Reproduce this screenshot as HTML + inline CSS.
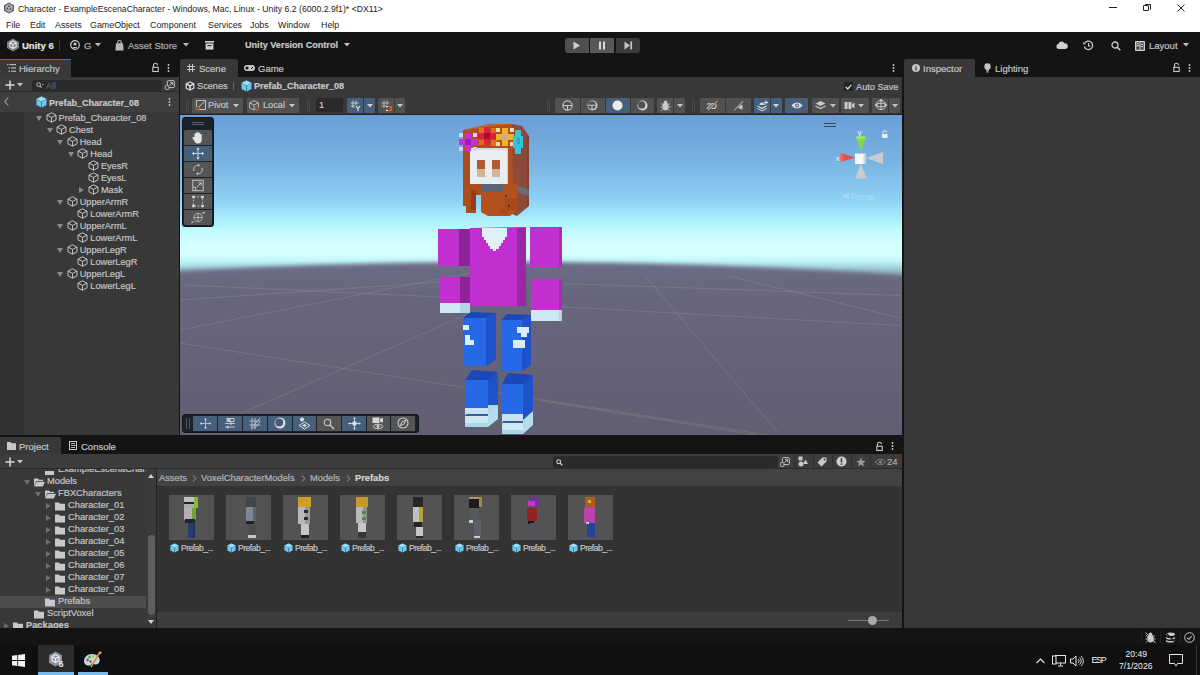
<!DOCTYPE html>
<html><head><meta charset="utf-8">
<style>
*{margin:0;padding:0;box-sizing:border-box}
html,body{width:1200px;height:675px;overflow:hidden;background:#141414;font-family:"Liberation Sans",sans-serif}
.a{position:absolute}
.t{position:absolute;white-space:nowrap;line-height:1;font-size:9.5px;color:#c4c4c4;-webkit-text-stroke:0.2px currentColor}
.b{font-weight:bold}
svg{position:absolute;overflow:visible}
.btn{position:absolute;background:#585858;border-radius:2px}
.sel{background:#46607c}
</style></head><body>
<!-- TITLE BAR -->
<div class="a" style="left:0;top:0;width:1200px;height:32px;background:#fff"></div>
<svg style="left:3px;top:2px" width="12" height="12" viewBox="0 0 12 12"><path d="M6 0.5L11 3.2V8.8L6 11.5L1 8.8V3.2Z" fill="#5a5f66"/><path d="M6 2.5L9 4.2V7.8L6 9.5L3 7.8V4.2Z" fill="none" stroke="#d8dde2" stroke-width="0.9"/><path d="M3 4.2L6 6L9 4.2M6 6V9.5" stroke="#d8dde2" stroke-width="0.9" fill="none"/></svg>
<div class="t" id="title" style="left:18px;top:4.6px;font-size:8.7px;color:#1a1a1a;-webkit-text-stroke:0">Character - ExampleEscenaCharacter - Windows, Mac, Linux - Unity 6.2 (6000.2.9f1)* &lt;DX11&gt;</div>
<div class="t" id="menu" style="left:6px;top:20.8px;font-size:8.9px;color:#1a1a1a;-webkit-text-stroke:0;width:400px">
<span style="position:absolute;left:0">File</span><span style="position:absolute;left:24px">Edit</span><span style="position:absolute;left:49px">Assets</span><span style="position:absolute;left:84px">GameObject</span><span style="position:absolute;left:144px">Component</span><span style="position:absolute;left:202px">Services</span><span style="position:absolute;left:244px">Jobs</span><span style="position:absolute;left:272px">Window</span><span style="position:absolute;left:315px">Help</span></div>
<div class="a" style="left:1109px;top:7px;width:8px;height:1px;background:#222"></div>
<div class="a" style="left:1143px;top:5px;width:6px;height:6px;border:1px solid #222;border-radius:1px"></div>
<div class="a" style="left:1145px;top:3.5px;width:6px;height:6px;border-top:1px solid #222;border-right:1px solid #222;border-radius:1px"></div>
<svg style="left:1177px;top:3.5px" width="8" height="8"><path d="M0.5 0.5L7.5 7.5M7.5 0.5L0.5 7.5" stroke="#222" stroke-width="1"/></svg>

<!-- MAIN TOOLBAR -->
<div class="a" style="left:0;top:32px;width:1200px;height:27px;background:#141414"></div>
<svg style="left:6px;top:38px" width="14" height="14" viewBox="0 0 14 14"><path d="M7 0.5L13 4V10L7 13.5L1 10V4Z" fill="#7b8088"/><path d="M7 3L10.2 4.8V8.6L7 10.5L3.8 8.6V4.8Z M3.8 4.8L7 6.6L10.2 4.8M7 6.6V10.5" fill="none" stroke="#e6e6e6" stroke-width="1.1"/></svg>
<div class="t b" style="left:22px;top:41px;font-size:9.5px;color:#e4e4e4">Unity 6</div>
<div class="a" style="left:59px;top:40px;width:1px;height:11px;background:#3a3a3a"></div>
<svg style="left:70px;top:40px" width="10" height="10" viewBox="0 0 10 10"><circle cx="5" cy="5" r="4.3" fill="none" stroke="#c8c8c8" stroke-width="1.2"/><circle cx="5" cy="4" r="1.6" fill="#c8c8c8"/><path d="M2.3 8C3 6.5 7 6.5 7.7 8" fill="#c8c8c8"/></svg>
<div class="t" style="left:84px;top:41.3px;font-size:9.5px;color:#b0b0b0">G</div>
<svg style="left:95px;top:43px" width="6" height="4"><path d="M0 0H6L3 3.5Z" fill="#bdbdbd"/></svg>
<svg style="left:115px;top:40px" width="9" height="11" viewBox="0 0 9 11"><path d="M1 3.2H8L8.6 10.5H0.4Z" fill="#b8b8b8"/><path d="M2.8 3.5V2.2A1.7 1.7 0 0 1 6.2 2.2V3.5" fill="none" stroke="#b8b8b8" stroke-width="1.2"/></svg>
<div class="t" style="left:128px;top:41.3px;font-size:9.5px;color:#b0b0b0">Asset Store</div>
<svg style="left:183px;top:43px" width="6" height="4"><path d="M0 0H6L3 3.5Z" fill="#bdbdbd"/></svg>
<svg style="left:205px;top:41px" width="9" height="9" viewBox="0 0 9 9"><rect x="0" y="0" width="9" height="1.6" fill="#cfcfcf"/><rect x="0.6" y="2.4" width="7.8" height="6.2" fill="#cfcfcf"/><rect x="2.5" y="4.2" width="4" height="1" fill="#141414"/></svg>
<div class="t b" style="left:245px;top:41px;font-size:9.1px;color:#c8c8c8">Unity Version Control</div>
<svg style="left:344px;top:43px" width="6" height="4"><path d="M0 0H6L3 3.5Z" fill="#c8c8c8"/></svg>
<!-- play controls -->
<div class="a" style="left:565px;top:38px;width:24px;height:15px;background:#4f4f4f;border-radius:3px 0 0 3px"></div>
<div class="a" style="left:590px;top:38px;width:24px;height:15px;background:#585858"></div>
<div class="a" style="left:616px;top:38px;width:24px;height:15px;background:#3b3b3b;border-radius:0 3px 3px 0"></div>
<svg style="left:573px;top:41px" width="8" height="9"><path d="M0.5 0.5L7 4.5L0.5 8.5Z" fill="#d0d0d0"/></svg>
<svg style="left:598px;top:41px" width="8" height="9"><rect x="1" y="0.5" width="2" height="8" fill="#d8d8d8"/><rect x="5" y="0.5" width="2" height="8" fill="#d8d8d8"/></svg>
<svg style="left:624px;top:41px" width="9" height="9"><path d="M0.5 0.5L6 4.5L0.5 8.5Z" fill="#c4c4c4"/><rect x="6.3" y="0.5" width="1.8" height="8" fill="#c4c4c4"/></svg>
<!-- right icons -->
<svg style="left:1056px;top:41px" width="12" height="8" viewBox="0 0 12 8"><path d="M2.5 8A2.5 2.5 0 0 1 2.3 3.1A3.4 3.4 0 0 1 8.6 2.4A2.8 2.8 0 0 1 9.3 8Z" fill="#cfcfcf"/></svg>
<svg style="left:1083px;top:40px" width="11" height="11" viewBox="0 0 11 11"><path d="M2 3A4.2 4.2 0 1 1 1.4 6.5" fill="none" stroke="#cfcfcf" stroke-width="1.2"/><path d="M0.3 1.5L2.6 4.2L0.4 4.4Z" fill="#cfcfcf"/><path d="M5.5 3V6H7.5" fill="none" stroke="#cfcfcf" stroke-width="1.1"/></svg>
<svg style="left:1111px;top:41px" width="10" height="10" viewBox="0 0 10 10"><circle cx="4" cy="4" r="3" fill="none" stroke="#cfcfcf" stroke-width="1.3"/><path d="M6.2 6.2L9.3 9.3" stroke="#cfcfcf" stroke-width="1.4"/></svg>
<svg style="left:1135px;top:41px" width="10" height="10" viewBox="0 0 10 10"><rect x="0" y="0" width="10" height="10" rx="0.8" fill="#cfcfcf"/><rect x="1.3" y="1.3" width="3.2" height="3" fill="#454545"/><rect x="1.3" y="5.3" width="3.2" height="3.4" fill="#454545"/><rect x="5.5" y="1.3" width="3.2" height="7.4" fill="#454545"/><rect x="2" y="2" width="1.5" height="1.5" fill="#cfcfcf"/><rect x="6" y="3" width="2" height="1" fill="#cfcfcf"/><rect x="6" y="5" width="2" height="1" fill="#cfcfcf"/></svg>
<div class="t" style="left:1149px;top:41px;font-size:9.5px;color:#c4c4c4">Layout</div>
<svg style="left:1183px;top:43px" width="6" height="4"><path d="M0 0H6L3 3.5Z" fill="#c4c4c4"/></svg>

<!-- TAB ROW -->
<div class="a" style="left:0;top:59px;width:1200px;height:18px;background:#141414"></div>
<!-- Hierarchy tab -->
<div class="a" style="left:0;top:59px;width:71px;height:18px;background:#383838;border-radius:0 2px 0 0"></div>
<div class="a" style="left:0;top:59px;width:71px;height:1px;background:#3a79bb"></div>
<svg style="left:7px;top:64px" width="9" height="8" viewBox="0 0 9 8"><rect x="0" y="0" width="1.5" height="1.2" fill="#bbb"/><rect x="2.5" y="0" width="6.5" height="1.2" fill="#bbb"/><rect x="1.5" y="3.3" width="1.5" height="1.2" fill="#bbb"/><rect x="4" y="3.3" width="5" height="1.2" fill="#bbb"/><rect x="1.5" y="6.6" width="1.5" height="1.2" fill="#bbb"/><rect x="4" y="6.6" width="5" height="1.2" fill="#bbb"/></svg>
<div class="t" style="left:19px;top:64px;font-size:9.5px;color:#c4c4c4">Hierarchy</div>
<svg style="left:152px;top:63px" width="7" height="9" viewBox="0 0 7 9"><path d="M1.5 4V2.3A2 2 0 0 1 5.5 2.3" fill="none" stroke="#c8c8c8" stroke-width="1.1"/><rect x="0.8" y="4.3" width="5.4" height="4.2" fill="none" stroke="#c8c8c8" stroke-width="1.1"/></svg>
<svg style="left:167px;top:64px" width="3" height="9"><circle cx="1.5" cy="1" r="0.9" fill="#d0d0d0"/><circle cx="1.5" cy="4" r="0.9" fill="#d0d0d0"/><circle cx="1.5" cy="7" r="0.9" fill="#d0d0d0"/></svg>

<!-- Scene tab -->
<div class="a" style="left:180px;top:59px;width:58px;height:18px;background:#383838;border-radius:2px 2px 0 0"></div>
<svg style="left:187px;top:64px" width="8" height="8" viewBox="0 0 8 8"><path d="M2.5 0V8M5.5 0V8M0 2.5H8M0 5.5H8" stroke="#c4c4c4" stroke-width="1.1"/></svg>
<div class="t" style="left:199px;top:64px;font-size:9.5px;color:#c4c4c4">Scene</div>
<svg style="left:244px;top:65px" width="11" height="6" viewBox="0 0 11 6"><rect x="0" y="0" width="11" height="6" rx="3" fill="#c4c4c4"/><circle cx="3" cy="3" r="1.6" fill="#191919"/><path d="M7 4L9 2" stroke="#191919" stroke-width="1"/></svg>
<div class="t" style="left:258px;top:64px;font-size:9.5px;color:#c4c4c4">Game</div>
<svg style="left:892px;top:64px" width="3" height="9"><circle cx="1.5" cy="1" r="0.9" fill="#d0d0d0"/><circle cx="1.5" cy="4" r="0.9" fill="#d0d0d0"/><circle cx="1.5" cy="7" r="0.9" fill="#d0d0d0"/></svg>

<!-- Inspector tab -->
<div class="a" style="left:904px;top:59px;width:71px;height:18px;background:#383838;border-radius:2px 2px 0 0"></div>
<svg style="left:912px;top:64px" width="8" height="8" viewBox="0 0 8 8"><circle cx="4" cy="4" r="4" fill="#c8c8c8"/><rect x="3.4" y="3.3" width="1.3" height="3.3" fill="#383838"/><circle cx="4" cy="2.1" r="0.7" fill="#383838"/></svg>
<div class="t" style="left:923px;top:64px;font-size:9.5px;color:#c4c4c4">Inspector</div>
<svg style="left:984px;top:63px" width="7" height="10" viewBox="0 0 7 10"><circle cx="3.5" cy="3.5" r="3.2" fill="#c4c4c4"/><rect x="2.2" y="5.5" width="2.6" height="2.3" fill="#c4c4c4"/><rect x="2.4" y="8.3" width="2.2" height="1.2" fill="#c4c4c4"/></svg>
<div class="t" style="left:995px;top:64px;font-size:9.5px;color:#c4c4c4">Lighting</div>
<svg style="left:1173px;top:63px" width="7" height="9" viewBox="0 0 7 9"><path d="M1.5 4V2.3A2 2 0 0 1 5.5 2.3" fill="none" stroke="#c8c8c8" stroke-width="1.1"/><rect x="0.8" y="4.3" width="5.4" height="4.2" fill="none" stroke="#c8c8c8" stroke-width="1.1"/></svg>
<svg style="left:1188px;top:64px" width="3" height="9"><circle cx="1.5" cy="1" r="0.9" fill="#d0d0d0"/><circle cx="1.5" cy="4" r="0.9" fill="#d0d0d0"/><circle cx="1.5" cy="7" r="0.9" fill="#d0d0d0"/></svg>

<!-- PANEL BODIES -->
<div class="a" id="hier" style="left:0;top:77px;width:179px;height:358px;background:#383838"></div>
<div class="a" id="scenep" style="left:180px;top:77px;width:722px;height:358px;background:#383838"></div>
<div class="a" id="insp" style="left:904px;top:77px;width:296px;height:551px;background:#383838"></div>

<div class="a" style="left:0;top:77px;width:179px;height:15px;background:#3c3c3c"></div>
<div class="a" style="left:0;top:91px;width:179px;height:1px;background:#2a2a2a"></div>
<svg style="left:5px;top:80px" width="10" height="10"><path d="M5 0.5V9.5M0.5 5H9.5" stroke="#d8d8d8" stroke-width="1.5"/></svg>
<svg style="left:17px;top:83px" width="6" height="4"><path d="M0 0H6L3 3.5Z" fill="#c4c4c4"/></svg>
<div class="a" style="left:32px;top:80px;width:130px;height:11px;background:#2a2a2a;border-radius:3px"></div>
<svg style="left:36px;top:82px" width="8" height="7" viewBox="0 0 8 7"><circle cx="2.6" cy="2.6" r="1.9" fill="none" stroke="#bbb" stroke-width="1"/><path d="M3.9 3.9L5.6 5.6" stroke="#bbb" stroke-width="1.1"/><path d="M6 2.5H7.6" stroke="#bbb" stroke-width="0.8"/></svg>
<div class="t" style="left:46px;top:82px;font-size:9px;color:#5e5e5e">All</div>
<svg style="left:165px;top:80px" width="10" height="10" viewBox="0 0 10 10"><rect x="2.3" y="0.6" width="7" height="7" rx="1" fill="none" stroke="#c4c4c4" stroke-width="1"/><path d="M4.5 5.5L7.3 2.7M5 2.6H7.4V5" fill="none" stroke="#c4c4c4" stroke-width="0.9"/><rect x="0.4" y="5.6" width="3.5" height="3.8" rx="0.8" fill="#383838" stroke="#c4c4c4" stroke-width="0.9"/></svg>
<div class="a" style="left:0;top:92px;width:179px;height:20px;background:#3e3e3e"></div>
<svg style="left:4px;top:97px" width="5" height="9"><path d="M4.3 0.5L0.8 4.5L4.3 8.5" fill="none" stroke="#a8a8a8" stroke-width="1.1"/></svg>
<svg style="left:36px;top:96px" width="11" height="12" viewBox="0 0 11 12"><path d="M5.5 0.5L10.5 3V9L5.5 11.5L0.5 9V3Z" fill="#6cc8f0"/><path d="M0.5 3L5.5 5.6L10.5 3M5.5 5.6V11.5" fill="none" stroke="#2b6f94" stroke-width="0.8"/><path d="M5.5 0.5L10.5 3L5.5 5.6L0.5 3Z" fill="#98def9"/></svg>
<div class="t b" style="left:49px;top:98.7px;font-size:9px;color:#c8c8c8">Prefab_Character_08</div>
<svg style="left:168px;top:98px" width="3" height="9"><circle cx="1.5" cy="1" r="0.9" fill="#c8c8c8"/><circle cx="1.5" cy="4" r="0.9" fill="#c8c8c8"/><circle cx="1.5" cy="7" r="0.9" fill="#c8c8c8"/></svg>
<div class="a" style="left:0;top:112px;width:24px;height:323px;background:#323232"></div>
<svg style="left:36.0px;top:116px" width="6" height="5"><path d="M0 0H6L3 5Z" fill="#8a8a8a"/></svg>
<svg style="left:45.5px;top:111.8px" width="11" height="11" viewBox="0 0 11 11"><path d="M5.5 0.8L10 3.1V7.9L5.5 10.2L1 7.9V3.1Z M1 3.1L5.5 5.4L10 3.1M5.5 5.4V10.2" fill="none" stroke="#c8c8c8" stroke-width="0.95" stroke-linejoin="round"/></svg>
<div class="t" style="left:58.5px;top:114px;font-size:9.2px;color:#c4c4c4">Prefab_Character_08</div>
<svg style="left:46.6px;top:128px" width="6" height="5"><path d="M0 0H6L3 5Z" fill="#8a8a8a"/></svg>
<svg style="left:56.1px;top:123.8px" width="11" height="11" viewBox="0 0 11 11"><path d="M5.5 0.8L10 3.1V7.9L5.5 10.2L1 7.9V3.1Z M1 3.1L5.5 5.4L10 3.1M5.5 5.4V10.2" fill="none" stroke="#c8c8c8" stroke-width="0.95" stroke-linejoin="round"/></svg>
<div class="t" style="left:69.1px;top:126px;font-size:9.2px;color:#c4c4c4">Chest</div>
<svg style="left:57.2px;top:140px" width="6" height="5"><path d="M0 0H6L3 5Z" fill="#8a8a8a"/></svg>
<svg style="left:66.7px;top:135.8px" width="11" height="11" viewBox="0 0 11 11"><path d="M5.5 0.8L10 3.1V7.9L5.5 10.2L1 7.9V3.1Z M1 3.1L5.5 5.4L10 3.1M5.5 5.4V10.2" fill="none" stroke="#c8c8c8" stroke-width="0.95" stroke-linejoin="round"/></svg>
<div class="t" style="left:79.7px;top:138px;font-size:9.2px;color:#c4c4c4">Head</div>
<svg style="left:67.8px;top:152px" width="6" height="5"><path d="M0 0H6L3 5Z" fill="#8a8a8a"/></svg>
<svg style="left:77.3px;top:147.8px" width="11" height="11" viewBox="0 0 11 11"><path d="M5.5 0.8L10 3.1V7.9L5.5 10.2L1 7.9V3.1Z M1 3.1L5.5 5.4L10 3.1M5.5 5.4V10.2" fill="none" stroke="#c8c8c8" stroke-width="0.95" stroke-linejoin="round"/></svg>
<div class="t" style="left:90.3px;top:150px;font-size:9.2px;color:#c4c4c4">Head</div>
<svg style="left:87.9px;top:159.8px" width="11" height="11" viewBox="0 0 11 11"><path d="M5.5 0.8L10 3.1V7.9L5.5 10.2L1 7.9V3.1Z M1 3.1L5.5 5.4L10 3.1M5.5 5.4V10.2" fill="none" stroke="#c8c8c8" stroke-width="0.95" stroke-linejoin="round"/></svg>
<div class="t" style="left:100.9px;top:162px;font-size:9.2px;color:#c4c4c4">EyesR</div>
<svg style="left:87.9px;top:171.8px" width="11" height="11" viewBox="0 0 11 11"><path d="M5.5 0.8L10 3.1V7.9L5.5 10.2L1 7.9V3.1Z M1 3.1L5.5 5.4L10 3.1M5.5 5.4V10.2" fill="none" stroke="#c8c8c8" stroke-width="0.95" stroke-linejoin="round"/></svg>
<div class="t" style="left:100.9px;top:174px;font-size:9.2px;color:#c4c4c4">EyesL</div>
<svg style="left:78.9px;top:187px" width="5" height="6"><path d="M0 0V6L5 3Z" fill="#8a8a8a"/></svg>
<svg style="left:87.9px;top:183.8px" width="11" height="11" viewBox="0 0 11 11"><path d="M5.5 0.8L10 3.1V7.9L5.5 10.2L1 7.9V3.1Z M1 3.1L5.5 5.4L10 3.1M5.5 5.4V10.2" fill="none" stroke="#c8c8c8" stroke-width="0.95" stroke-linejoin="round"/></svg>
<div class="t" style="left:100.9px;top:186px;font-size:9.2px;color:#c4c4c4">Mask</div>
<svg style="left:57.2px;top:200px" width="6" height="5"><path d="M0 0H6L3 5Z" fill="#8a8a8a"/></svg>
<svg style="left:66.7px;top:195.8px" width="11" height="11" viewBox="0 0 11 11"><path d="M5.5 0.8L10 3.1V7.9L5.5 10.2L1 7.9V3.1Z M1 3.1L5.5 5.4L10 3.1M5.5 5.4V10.2" fill="none" stroke="#c8c8c8" stroke-width="0.95" stroke-linejoin="round"/></svg>
<div class="t" style="left:79.7px;top:198px;font-size:9.2px;color:#c4c4c4">UpperArmR</div>
<svg style="left:77.3px;top:207.8px" width="11" height="11" viewBox="0 0 11 11"><path d="M5.5 0.8L10 3.1V7.9L5.5 10.2L1 7.9V3.1Z M1 3.1L5.5 5.4L10 3.1M5.5 5.4V10.2" fill="none" stroke="#c8c8c8" stroke-width="0.95" stroke-linejoin="round"/></svg>
<div class="t" style="left:90.3px;top:210px;font-size:9.2px;color:#c4c4c4">LowerArmR</div>
<svg style="left:57.2px;top:224px" width="6" height="5"><path d="M0 0H6L3 5Z" fill="#8a8a8a"/></svg>
<svg style="left:66.7px;top:219.8px" width="11" height="11" viewBox="0 0 11 11"><path d="M5.5 0.8L10 3.1V7.9L5.5 10.2L1 7.9V3.1Z M1 3.1L5.5 5.4L10 3.1M5.5 5.4V10.2" fill="none" stroke="#c8c8c8" stroke-width="0.95" stroke-linejoin="round"/></svg>
<div class="t" style="left:79.7px;top:222px;font-size:9.2px;color:#c4c4c4">UpperArmL</div>
<svg style="left:77.3px;top:231.8px" width="11" height="11" viewBox="0 0 11 11"><path d="M5.5 0.8L10 3.1V7.9L5.5 10.2L1 7.9V3.1Z M1 3.1L5.5 5.4L10 3.1M5.5 5.4V10.2" fill="none" stroke="#c8c8c8" stroke-width="0.95" stroke-linejoin="round"/></svg>
<div class="t" style="left:90.3px;top:234px;font-size:9.2px;color:#c4c4c4">LowerArmL</div>
<svg style="left:57.2px;top:248px" width="6" height="5"><path d="M0 0H6L3 5Z" fill="#8a8a8a"/></svg>
<svg style="left:66.7px;top:243.8px" width="11" height="11" viewBox="0 0 11 11"><path d="M5.5 0.8L10 3.1V7.9L5.5 10.2L1 7.9V3.1Z M1 3.1L5.5 5.4L10 3.1M5.5 5.4V10.2" fill="none" stroke="#c8c8c8" stroke-width="0.95" stroke-linejoin="round"/></svg>
<div class="t" style="left:79.7px;top:246px;font-size:9.2px;color:#c4c4c4">UpperLegR</div>
<svg style="left:77.3px;top:255.8px" width="11" height="11" viewBox="0 0 11 11"><path d="M5.5 0.8L10 3.1V7.9L5.5 10.2L1 7.9V3.1Z M1 3.1L5.5 5.4L10 3.1M5.5 5.4V10.2" fill="none" stroke="#c8c8c8" stroke-width="0.95" stroke-linejoin="round"/></svg>
<div class="t" style="left:90.3px;top:258px;font-size:9.2px;color:#c4c4c4">LowerLegR</div>
<svg style="left:57.2px;top:272px" width="6" height="5"><path d="M0 0H6L3 5Z" fill="#8a8a8a"/></svg>
<svg style="left:66.7px;top:267.8px" width="11" height="11" viewBox="0 0 11 11"><path d="M5.5 0.8L10 3.1V7.9L5.5 10.2L1 7.9V3.1Z M1 3.1L5.5 5.4L10 3.1M5.5 5.4V10.2" fill="none" stroke="#c8c8c8" stroke-width="0.95" stroke-linejoin="round"/></svg>
<div class="t" style="left:79.7px;top:270px;font-size:9.2px;color:#c4c4c4">UpperLegL</div>
<svg style="left:77.3px;top:279.8px" width="11" height="11" viewBox="0 0 11 11"><path d="M5.5 0.8L10 3.1V7.9L5.5 10.2L1 7.9V3.1Z M1 3.1L5.5 5.4L10 3.1M5.5 5.4V10.2" fill="none" stroke="#c8c8c8" stroke-width="0.95" stroke-linejoin="round"/></svg>
<div class="t" style="left:90.3px;top:282px;font-size:9.2px;color:#c4c4c4">LowerLegL</div>

<svg style="left:185px;top:81px" width="10" height="10" viewBox="0 0 10 10"><path d="M5 0.2L9.4 2.6V7.4L5 9.8L0.6 7.4V2.6Z" fill="#dcdcdc"/><path d="M1.8 3.9L4.2 5.2V8.2L1.8 6.8Z M8.2 3.9L5.8 5.2V8.2L8.2 6.8Z M5 1.4L7.3 2.7L5 4L2.7 2.7Z" fill="#383838"/></svg>
<div class="t" style="left:197px;top:82px;font-size:9.2px;color:#c4c4c4">Scenes</div>
<div class="a" style="left:233px;top:82px;width:1px;height:8px;background:#6a6a6a"></div>
<svg style="left:241px;top:80px" width="11" height="12" viewBox="0 0 11 12"><path d="M5.5 0.5L10.5 3V9L5.5 11.5L0.5 9V3Z" fill="#6cc8f0"/><path d="M0.5 3L5.5 5.6L10.5 3M5.5 5.6V11.5" fill="none" stroke="#2b6f94" stroke-width="0.8"/><path d="M5.5 0.5L10.5 3L5.5 5.6L0.5 3Z" fill="#98def9"/></svg>
<div class="t b" style="left:254px;top:82.3px;font-size:9px;color:#c8c8c8">Prefab_Character_08</div>
<div class="a" style="left:844px;top:82px;width:9px;height:9px;background:#232323;border-radius:1px"></div>
<svg style="left:845px;top:84px" width="7" height="6"><path d="M0.8 3L2.8 5L6.3 0.8" fill="none" stroke="#e0e0e0" stroke-width="1.2"/></svg>
<div class="t" style="left:856px;top:83px;font-size:9.2px;color:#c4c4c4">Auto Save</div>
<div class="a" style="left:186px;top:99px;width:1px;height:13px;background:#4a4a4a"></div><div class="a" style="left:188px;top:99px;width:1px;height:13px;background:#4a4a4a"></div>
<div class="a" style="left:192px;top:98px;width:51px;height:15px;background:#515151;border-radius:1px"></div>
<svg style="left:195px;top:100px" width="11" height="11" viewBox="0 0 11 11"><rect x="1.5" y="0.5" width="9" height="9" fill="none" stroke="#c0c0c0" stroke-width="1"/><path d="M3 8L9.5 1.5" stroke="#c0c0c0" stroke-width="1"/><circle cx="2.5" cy="8.5" r="1.8" fill="#585858" stroke="#e0582a" stroke-width="1"/></svg>
<div class="t" style="left:208px;top:101px;font-size:9.2px;color:#c4c4c4">Pivot</div>
<svg style="left:233px;top:104px" width="6" height="4"><path d="M0 0H6L3 3.5Z" fill="#c4c4c4"/></svg>
<div class="a" style="left:247px;top:98px;width:52px;height:15px;background:#515151;border-radius:1px"></div>
<svg style="left:249px;top:100px" width="11" height="11" viewBox="0 0 11 11"><path d="M5 0.6L9.5 2.8V7.8L5 10L0.6 7.8V2.8Z M0.6 2.8L5 5L9.5 2.8M5 5V10" fill="none" stroke="#c0c0c0" stroke-width="0.95"/><circle cx="8" cy="8.5" r="1.8" fill="#585858" stroke="#e0582a" stroke-width="1"/></svg>
<div class="t" style="left:263px;top:101px;font-size:9.2px;color:#c4c4c4">Local</div>
<svg style="left:289px;top:104px" width="6" height="4"><path d="M0 0H6L3 3.5Z" fill="#c4c4c4"/></svg>
<div class="a" style="left:307px;top:99px;width:1px;height:13px;background:#4a4a4a"></div><div class="a" style="left:309px;top:99px;width:1px;height:13px;background:#4a4a4a"></div>
<div class="a" style="left:316px;top:98px;width:27px;height:14px;background:#2a2a2a;border-radius:2px"></div>
<div class="t" style="left:319px;top:101px;font-size:9.2px;color:#c4c4c4">1</div>
<div class="a" style="left:347px;top:98px;width:16px;height:15px;background:#46607c;border-radius:1px"></div><div class="a" style="left:364px;top:98px;width:11px;height:15px;background:#46607c;border-radius:1px"></div>
<svg style="left:350px;top:100px" width="11" height="11" viewBox="0 0 11 11"><path d="M3 0.5V8M6 0.5V5M0.5 3H8.5M0.5 6H5" stroke="#d0d0d0" stroke-width="0.9"/><path d="M6 6L8 8.5L10 6M8 8.5V11" stroke="#e8e8e8" stroke-width="1.1" fill="none"/></svg>
<svg style="left:367px;top:104px" width="6" height="4"><path d="M0 0H6L3 3.5Z" fill="#d0d0d0"/></svg>
<div class="a" style="left:378px;top:98px;width:16px;height:15px;background:#515151;border-radius:1px"></div><div class="a" style="left:395px;top:98px;width:10px;height:15px;background:#515151;border-radius:1px"></div>
<svg style="left:381px;top:100px" width="11" height="11" viewBox="0 0 11 11"><path d="M3 0.5V8M6 0.5V5M0.5 3H8.5M0.5 6H5" stroke="#c0c0c0" stroke-width="0.9"/><path d="M6 6.5H8.5A2 2 0 0 1 8.5 10.5H6" stroke="#f06020" stroke-width="1.3" fill="none"/><rect x="5" y="6" width="1.5" height="1.2" fill="#fff"/><rect x="5" y="9.8" width="1.5" height="1.2" fill="#fff"/></svg>
<svg style="left:397px;top:104px" width="6" height="4"><path d="M0 0H6L3 3.5Z" fill="#c4c4c4"/></svg>
<div class="a" style="left:547px;top:99px;width:1px;height:13px;background:#4a4a4a"></div><div class="a" style="left:549px;top:99px;width:1px;height:13px;background:#4a4a4a"></div>
<div class="a" style="left:555px;top:98px;width:25px;height:15px;background:#515151;border-radius:1px"></div><div class="a" style="left:581px;top:98px;width:24px;height:15px;background:#515151;border-radius:1px"></div><div class="a" style="left:606px;top:98px;width:24px;height:15px;background:#46607c;border-radius:1px"></div><div class="a" style="left:631px;top:98px;width:23px;height:15px;background:#515151;border-radius:1px"></div>
<svg style="left:562px;top:100px" width="11" height="11" viewBox="0 0 11 11"><circle cx="5.5" cy="5.5" r="4.6" fill="none" stroke="#c8c8c8" stroke-width="1.1"/><path d="M0.8 5.5H10.2M5.5 5.5V10.2" stroke="#c8c8c8" stroke-width="1.1"/></svg>
<svg style="left:587px;top:100px" width="11" height="11" viewBox="0 0 11 11"><path d="M5.5 0.4A5.1 5.1 0 1 1 5.5 10.6A5.1 5.1 0 1 1 5.5 0.4Z M4.9 1.2A3.9 3.9 0 1 0 4.9 9A3.9 3.9 0 1 0 4.9 1.2Z" fill="#c8c8c8" fill-rule="evenodd"/><path d="M1 5.2H9M5 5.2V9.2" stroke="#c8c8c8" stroke-width="1.1"/></svg>
<svg style="left:612px;top:100px" width="11" height="11"><circle cx="5.5" cy="5.5" r="5" fill="#ececec"/></svg>
<svg style="left:637px;top:100px" width="11" height="11" viewBox="0 0 11 11"><path d="M5.5 0.4A5.1 5.1 0 1 1 5.5 10.6A5.1 5.1 0 1 1 5.5 0.4Z M4.7 1.3A3.6 3.6 0 1 0 4.7 8.5A3.6 3.6 0 1 0 4.7 1.3Z" fill="#d0d0d0" fill-rule="evenodd"/></svg>
<div class="a" style="left:657px;top:98px;width:16px;height:15px;background:#515151;border-radius:1px"></div><div class="a" style="left:674px;top:98px;width:11px;height:15px;background:#515151;border-radius:1px"></div>
<svg style="left:660px;top:100px" width="11" height="11" viewBox="0 0 11 11"><ellipse cx="5.5" cy="6.5" rx="3.2" ry="4" fill="#c8c8c8"/><circle cx="5.5" cy="2.2" r="1.8" fill="#c8c8c8"/><path d="M1 3.5L2.5 4.5M10 3.5L8.5 4.5M0.5 7H2M10.5 7H9M1 10.5L2.5 9.3M10 10.5L8.5 9.3" stroke="#c8c8c8" stroke-width="0.9"/></svg>
<svg style="left:677px;top:104px" width="6" height="4"><path d="M0 0H6L3 3.5Z" fill="#c4c4c4"/></svg>
<div class="a" style="left:692px;top:99px;width:1px;height:13px;background:#4a4a4a"></div><div class="a" style="left:694px;top:99px;width:1px;height:13px;background:#4a4a4a"></div>
<div class="a" style="left:700px;top:98px;width:25px;height:15px;background:#515151;border-radius:1px"></div><div class="a" style="left:726px;top:98px;width:25px;height:15px;background:#515151;border-radius:1px"></div>
<svg style="left:706px;top:100px" width="14" height="11" viewBox="0 0 14 11"><text x="0.5" y="9" font-family="Liberation Sans" font-weight="bold" font-size="8.5" fill="#c8c8c8" letter-spacing="-0.6">2D</text><path d="M2 10.3L11.5 1" stroke="#515151" stroke-width="2.2"/><path d="M2 10.3L11.5 1" stroke="#d0d0d0" stroke-width="1"/></svg><svg style="left:733px;top:100px" width="11" height="11" viewBox="0 0 11 11"><path d="M5 6.5H7.5L9.5 4.5V9.5L7.5 7.8" fill="#c8c8c8"/><path d="M6.5 4.8L8.5 3V9.7L6.5 8.2H5V6.8" fill="#c8c8c8"/><path d="M1.2 10.3L10 1.2" stroke="#515151" stroke-width="2"/><path d="M1.2 10.3L10 1.2" stroke="#d0d0d0" stroke-width="1"/></svg><div class="a" style="left:754px;top:98px;width:16px;height:15px;background:#46607c;border-radius:1px"></div><div class="a" style="left:771px;top:98px;width:11px;height:15px;background:#46607c;border-radius:1px"></div>
<svg style="left:757px;top:100px" width="12" height="11" viewBox="0 0 12 11"><path d="M0.5 6L5 8.5L9.5 6" fill="none" stroke="#d8d8d8" stroke-width="1.2"/><path d="M0.5 8.5L5 11L9.5 8.5" fill="none" stroke="#d8d8d8" stroke-width="1"/><path d="M2.5 5A2.5 2.5 0 0 1 7.5 5Z" fill="#d8d8d8"/><path d="M9 0.5V4.5M7 2.5H11" stroke="#e8e8e8" stroke-width="1"/></svg>
<svg style="left:773px;top:104px" width="6" height="4"><path d="M0 0H6L3 3.5Z" fill="#d0d0d0"/></svg>
<div class="a" style="left:785px;top:98px;width:23px;height:15px;background:#46607c;border-radius:1px"></div>
<svg style="left:791px;top:101px" width="12" height="9" viewBox="0 0 12 9"><path d="M0.5 4.5C3 0.5 9 0.5 11.5 4.5C9 8.5 3 8.5 0.5 4.5Z" fill="#d8d8d8"/><circle cx="6" cy="4.5" r="2" fill="#46607c"/><circle cx="6" cy="4.5" r="1" fill="#d8d8d8"/></svg>
<div class="a" style="left:812px;top:98px;width:27px;height:15px;background:#515151;border-radius:1px"></div>
<svg style="left:815px;top:100px" width="11" height="11" viewBox="0 0 11 11"><path d="M5.5 1L10.5 3.5L5.5 6L0.5 3.5Z" fill="#c8c8c8"/><path d="M0.5 6L5.5 8.5L10.5 6" fill="none" stroke="#c8c8c8" stroke-width="1.3"/></svg>
<svg style="left:830px;top:104px" width="6" height="4"><path d="M0 0H6L3 3.5Z" fill="#c4c4c4"/></svg>
<div class="a" style="left:841px;top:98px;width:28px;height:15px;background:#515151;border-radius:1px"></div>
<svg style="left:844px;top:101px" width="11" height="9" viewBox="0 0 11 9"><rect x="0.5" y="1" width="7" height="7" fill="#c8c8c8"/><path d="M8 3.5L10.5 1.5V7.5L8 5.5Z" fill="#c8c8c8"/><path d="M4 1V8" stroke="#585858" stroke-width="0.8"/></svg>
<svg style="left:858px;top:104px" width="6" height="4"><path d="M0 0H6L3 3.5Z" fill="#c4c4c4"/></svg>
<div class="a" style="left:872px;top:98px;width:16px;height:15px;background:#515151;border-radius:1px"></div><div class="a" style="left:889px;top:98px;width:11px;height:15px;background:#515151;border-radius:1px"></div>
<svg style="left:875px;top:99px" width="12" height="12" viewBox="0 0 12 12"><circle cx="6" cy="6" r="4.6" fill="none" stroke="#d0d0d0" stroke-width="1"/><ellipse cx="6" cy="6" rx="4.6" ry="1.8" fill="none" stroke="#d0d0d0" stroke-width="0.9"/><path d="M6 1.4V10.6" stroke="#d0d0d0" stroke-width="0.9"/><circle cx="6" cy="1.3" r="1.2" fill="#d0d0d0"/><circle cx="1.3" cy="6" r="1.2" fill="#d0d0d0"/><circle cx="10.7" cy="6" r="1.2" fill="#d0d0d0"/></svg>
<svg style="left:892px;top:104px" width="6" height="4"><path d="M0 0H6L3 3.5Z" fill="#c4c4c4"/></svg>
<svg style="left:180px;top:114px;overflow:hidden" width="722" height="321" viewBox="180 114 722 321"><defs><linearGradient id="sky" x1="0" y1="114" x2="0" y2="272" gradientUnits="userSpaceOnUse"><stop offset="0" stop-color="#6a9ed5"/><stop offset="0.29" stop-color="#78b2e2"/><stop offset="0.54" stop-color="#8ed0f4"/><stop offset="0.64" stop-color="#a2e8fa"/><stop offset="0.74" stop-color="#c0fbfe"/><stop offset="0.82" stop-color="#d4feff"/><stop offset="0.89" stop-color="#d6feff"/><stop offset="0.93" stop-color="#bff6f8"/><stop offset="1" stop-color="#90b8c8"/></linearGradient><linearGradient id="gnd" x1="0" y1="258" x2="0" y2="435" gradientUnits="userSpaceOnUse"><stop offset="0" stop-color="#6d6d8a"/><stop offset="0.15" stop-color="#68677f"/><stop offset="1" stop-color="#625f72"/></linearGradient><filter id="bl" x="-5%" y="-50%" width="110%" height="200%"><feGaussianBlur stdDeviation="2.2"/></filter></defs><rect x="180" y="114" width="722" height="321" fill="url(#sky)"/><path d="M160,272.1 L180,271.0 L200,270.0 L220,269.0 L240,268.1 L260,267.2 L280,266.4 L300,265.7 L320,265.1 L340,264.5 L360,263.9 L380,263.5 L400,263.1 L420,262.8 L440,262.5 L460,262.3 L480,262.2 L500,262.1 L520,262.1 L540,262.2 L560,262.3 L580,262.5 L600,262.8 L620,263.1 L640,263.5 L660,263.9 L680,264.4 L700,265.0 L720,265.7 L740,266.4 L760,267.2 L780,268.0 L800,268.9 L820,269.9 L840,271.0 L860,272.1 L880,273.3 L900,274.5 L920,275.8 L924,440 L160,440Z" fill="url(#gnd)" filter="url(#bl)"/><line x1="180" y1="330" x2="470" y2="273" stroke="#a8a090" stroke-opacity="0.32" stroke-width="0.9"/><line x1="180" y1="343" x2="780" y2="437" stroke="#a8a090" stroke-opacity="0.32" stroke-width="0.9"/><line x1="240" y1="414" x2="470" y2="313" stroke="#a8a090" stroke-opacity="0.32" stroke-width="0.9"/><line x1="645" y1="276" x2="780" y2="435" stroke="#a8a090" stroke-opacity="0.32" stroke-width="0.9"/><line x1="530" y1="305" x2="900" y2="325.5" stroke="#a8a090" stroke-opacity="0.32" stroke-width="0.9"/><line x1="729" y1="276" x2="900" y2="318" stroke="#a8a090" stroke-opacity="0.32" stroke-width="0.9"/><line x1="564" y1="283.5" x2="900" y2="295.5" stroke="#a8a090" stroke-opacity="0.32" stroke-width="0.9"/><line x1="180" y1="300" x2="441" y2="282" stroke="#a8a090" stroke-opacity="0.32" stroke-width="0.9"/><line x1="186" y1="285" x2="441" y2="297" stroke="#a8a090" stroke-opacity="0.32" stroke-width="0.9"/><line x1="540" y1="400.5" x2="756" y2="435" stroke="#a8a090" stroke-opacity="0.32" stroke-width="0.9"/><polygon points="463,318 486,318 486,366 463,366" fill="#2569e6"/><polygon points="486,318 496,313 496,360 486,366" fill="#1d52c8"/><polygon points="463,318 470,312 496,313 486,318" fill="#1a48b8"/><rect x="463" y="325" width="6" height="5" fill="#dcecf8"/><rect x="465" y="335" width="5" height="10" fill="#dcecf8"/><rect x="469" y="340" width="5" height="5" fill="#dcecf8"/><polygon points="501,320 522,320 522,371 501,371" fill="#2569e6"/><polygon points="522,320 531,315 531,365 522,371" fill="#1d52c8"/><polygon points="501,320 507,314 531,315 522,320" fill="#1a48b8"/><rect x="517" y="327" width="12" height="6" fill="#dcecf8"/><rect x="521" y="333" width="6" height="4" fill="#dcecf8"/><rect x="513" y="340" width="12" height="8" fill="#dcecf8"/><polygon points="465,380 488,380 488,427 465,427" fill="#2569e6"/><polygon points="488,380 498,372 498,419 488,427" fill="#1d52c8"/><polygon points="465,380 472,370 498,372 488,380" fill="#1a48b8"/><rect x="465" y="408" width="23" height="7" fill="#c8e2ef"/><rect x="488" y="405" width="10" height="8" fill="#b0d4e4"/><rect x="466" y="414" width="22" height="1.5" fill="#3c5a8a"/><rect x="465" y="416" width="23" height="11" fill="#cde8f2"/><rect x="465" y="423" width="23" height="4" fill="#a9d6ea"/><polygon points="488,413 498,405 498,419 488,427" fill="#b4dcea"/><polygon points="502,384 523,384 523,434 502,434" fill="#2569e6"/><polygon points="523,384 533,375 533,425 523,434" fill="#1d52c8"/><polygon points="502,384 508,373 533,375 523,384" fill="#1a48b8"/><rect x="502" y="414" width="21" height="8" fill="#c8e2ef"/><rect x="503" y="421" width="20" height="1.5" fill="#3c5a8a"/><rect x="502" y="423" width="21" height="11" fill="#cde8f2"/><rect x="502" y="430" width="21" height="4" fill="#a9d6ea"/><polygon points="523,420 533,411 533,425 523,434" fill="#b4dcea"/><polygon points="470,228 526,227 526,306 470,306" fill="#c22fd1"/><rect x="517" y="228" width="9" height="78" fill="#9a27a8"/><polygon points="482,228 507,228 507,237 505,237 505,240 503,240 503,243 501,243 501,246 499,246 499,249 496,249 496,251 493,251 493,249 490,249 490,246 488,246 488,243 486,243 486,240 484,240 484,237 482,237" fill="#e1eef8"/><polygon points="438,229 470,229 470,266 438,266" fill="#c22fd1"/><rect x="459" y="229" width="11" height="37" fill="#8f2499"/><polygon points="440,277 470,277 470,313 440,313" fill="#c22fd1"/><rect x="460" y="277" width="10" height="26" fill="#8f2499"/><rect x="440" y="303" width="30" height="10" fill="#cde8f3"/><rect x="460" y="303" width="10" height="10" fill="#b2d6e6"/><polygon points="530,227 562,227 562,267 530,267" fill="#c22fd1"/><rect x="559" y="227" width="3" height="40" fill="#a82cb8"/><polygon points="531,279 562,279 562,321 531,321" fill="#c22fd1"/><rect x="559" y="279" width="3" height="31" fill="#a82cb8"/><rect x="531" y="310" width="31" height="11" fill="#cde8f3"/><rect x="559" y="310" width="3" height="11" fill="#b2d6e6"/><polygon points="512,124 522,126 529,136 529,206 517,216 512,214" fill="#8c4a38"/><rect x="527" y="136" width="2" height="70" fill="#7c4232"/><polygon points="463,130 488,124 512,124 510,127" fill="#c4622e"/><polygon points="463,130 512,124 513,184 463,184" fill="#b0501f"/><rect x="463" y="150" width="7" height="34" fill="#a94c1e"/><polygon points="463,184 482,184 482,195 476,195 476,213 466,213 466,206 463,206" fill="#ad4d1e"/><rect x="471" y="190" width="5" height="20" fill="#8e3e18"/><polygon points="481,184 517,184 517,210 510,216 488,216 481,212" fill="#b3511f"/><rect x="505" y="198" width="12" height="12" fill="#a54a1c"/><rect x="500" y="208" width="8" height="6" fill="#a84b1c"/><rect x="505" y="195" width="2" height="2" fill="#5a3020"/><rect x="508" y="205" width="2" height="2" fill="#5a3020"/><rect x="481" y="184" width="22" height="8" fill="#5d6476"/><polygon points="517,185 529,190 529,196 517,192" fill="#6a6a78"/><rect x="470" y="148" width="38" height="36" fill="#e6eef2"/><rect x="470" y="148" width="38" height="2" fill="#d2dee6"/><rect x="507" y="148" width="1" height="36" fill="#c8d4dc"/><rect x="477" y="160" width="8" height="9" fill="#b25a30"/><rect x="477" y="169" width="8" height="8" fill="#d4b494"/><rect x="492" y="160" width="8" height="9" fill="#b25a30"/><rect x="492" y="169" width="8" height="8" fill="#d4b494"/><rect x="479" y="128" width="6" height="6" fill="#e07020"/><rect x="491" y="140" width="6" height="6" fill="#e07020"/><rect x="479" y="140" width="5" height="5" fill="#e06a20"/><rect x="491" y="128" width="5" height="5" fill="#e86a20"/><rect x="459" y="139" width="18" height="6" fill="#c630dc"/><rect x="465" y="133" width="6" height="18" fill="#c630dc"/><rect x="465" y="139" width="6" height="6" fill="#9420b8"/><rect x="459" y="133" width="4" height="4" fill="#dcd0f0"/><rect x="473" y="147" width="4" height="4" fill="#dcd0f0"/><rect x="473" y="133" width="4" height="4" fill="#dcd0f0"/><rect x="459" y="147" width="4" height="4" fill="#dcd0f0"/><rect x="478" y="133" width="18" height="6" fill="#e01e3c"/><rect x="484" y="127" width="6" height="18" fill="#e01e3c"/><rect x="484" y="133" width="6" height="6" fill="#a8102a"/><rect x="496" y="134" width="18" height="6" fill="#e8b428"/><rect x="502" y="128" width="6" height="18" fill="#e8b428"/><rect x="502" y="134" width="6" height="6" fill="#d2aa88"/><rect x="496" y="128" width="4" height="4" fill="#f0dcaa"/><rect x="510" y="142" width="4" height="4" fill="#f0dcaa"/><rect x="510" y="128" width="4" height="4" fill="#f0dcaa"/><rect x="496" y="142" width="4" height="4" fill="#f0dcaa"/><rect x="515" y="130" width="6" height="24" fill="#38c4d8"/><rect x="513" y="136" width="10" height="12" fill="#38c4d8"/><rect x="517" y="138" width="3" height="6" fill="#2aa6bc"/></svg>
<div class="a" style="left:180px;top:113.5px;width:722px;height:1px;background:#241f20"></div>
<div class="a" style="left:182px;top:117px;width:32px;height:110px;background:#19212b;border-radius:3px;border:1px solid #10151b"></div>
<div class="a" style="left:192px;top:122px;width:12px;height:1px;background:#5a6470"></div><div class="a" style="left:192px;top:124px;width:12px;height:1px;background:#5a6470"></div>
<div class="a" style="left:184px;top:130px;width:28px;height:15px;background:#555555;border-radius:2px 2px 0 0"></div>
<div class="a" style="left:184px;top:146px;width:28px;height:15px;background:#46607c;border-radius:0"></div>
<div class="a" style="left:184px;top:162px;width:28px;height:15px;background:#555555;border-radius:0"></div>
<div class="a" style="left:184px;top:178px;width:28px;height:15px;background:#555555;border-radius:0"></div>
<div class="a" style="left:184px;top:194px;width:28px;height:15px;background:#555555;border-radius:0"></div>
<div class="a" style="left:184px;top:210px;width:28px;height:15px;background:#555555;border-radius:0 0 2px 2px"></div>
<svg style="left:192px;top:131px" width="12" height="13" viewBox="0 0 12 13"><path d="M2.5 7V3.2A0.9 0.9 0 0 1 4.3 3.2V6.5V1.8A0.9 0.9 0 0 1 6.1 1.8V6.5V2.3A0.9 0.9 0 0 1 7.9 2.3V6.8V3.8A0.9 0.9 0 0 1 9.7 3.8V8.5C9.7 11 8.5 12.5 6.3 12.5H5.5C4 12.5 3.3 11.7 2.3 10L0.6 7.2A0.9 0.9 0 0 1 2.2 6.3Z" fill="#e6e6e6"/></svg>
<svg style="left:191px;top:147px" width="14" height="13" viewBox="0 0 14 13"><path d="M7 1V12M1.5 6.5H12.5" stroke="#b9d2ea" stroke-width="1"/><path d="M7 0.5L5.3 2.6H8.7Z M7 12.5L5.3 10.4H8.7Z M1 6.5L3.1 4.8V8.2Z M13 6.5L10.9 4.8V8.2Z" fill="#d8e6f4"/></svg>
<svg style="left:192px;top:163px" width="12" height="13" viewBox="0 0 12 13"><path d="M2 8A4.2 4.2 0 0 1 6.5 2.2M10 5A4.2 4.2 0 0 1 5.5 10.8" fill="none" stroke="#bdbdbd" stroke-width="1"/><path d="M6 0.5L8 2.3L6 4Z M6 9L4 10.7L6 12.5Z" fill="#bdbdbd"/></svg>
<svg style="left:192px;top:179px" width="12" height="13" viewBox="0 0 12 13"><rect x="0.8" y="1.3" width="10.4" height="10.4" fill="none" stroke="#c4c4c4" stroke-width="1"/><path d="M5 8L9 4M6.5 3.8H9.2V6.5" fill="none" stroke="#c4c4c4" stroke-width="1"/><path d="M0.8 8.3H3.8V11.7" fill="none" stroke="#c4c4c4" stroke-width="1"/></svg>
<svg style="left:192px;top:195px" width="12" height="13" viewBox="0 0 12 13"><rect x="1.5" y="2" width="9" height="9" fill="none" stroke="#bdbdbd" stroke-width="0.9" stroke-dasharray="2 1.5"/><rect x="0.3" y="0.8" width="2.4" height="2.4" fill="#e0e0e0"/><rect x="9.3" y="0.8" width="2.4" height="2.4" fill="#e0e0e0"/><rect x="0.3" y="9.8" width="2.4" height="2.4" fill="#e0e0e0"/><rect x="9.3" y="9.8" width="2.4" height="2.4" fill="#e0e0e0"/></svg>
<svg style="left:191px;top:211px" width="14" height="13" viewBox="0 0 14 13"><circle cx="7" cy="6.5" r="4.2" fill="none" stroke="#bdbdbd" stroke-width="0.9"/><path d="M7 2.5V10.5M3 6.5H11" stroke="#bdbdbd" stroke-width="0.9"/><path d="M1 12.3L3 10.3M13 0.7L11 2.7" stroke="#bdbdbd" stroke-width="0.9"/><path d="M0.5 12.5V10.5H2.5Z M13.5 0.5V2.5H11.5Z" fill="#d0d0d0"/></svg>
<div class="a" style="left:824px;top:123px;width:12px;height:1px;background:#404a55"></div><div class="a" style="left:824px;top:126px;width:12px;height:1px;background:#404a55"></div>
<svg style="left:830px;top:126px" width="60" height="76" viewBox="830 126 60 76"><text x="857.5" y="134.5" font-family="Liberation Sans" font-size="8" fill="#eef6ff">y</text><text x="835.5" y="161" font-family="Liberation Sans" font-size="8" fill="#eef6ff">x</text><polygon points="856,137 866,137 861,151" fill="#7fd84a"/><ellipse cx="861" cy="137.5" rx="5" ry="1.5" fill="#9ae86a"/><polygon points="841,153 841,162 855,157.5" fill="#e8504a"/><ellipse cx="841.5" cy="157.5" rx="1.5" ry="4.5" fill="#f06a60"/><polygon points="883,152 883,164 866,158" fill="#c8ccd0"/><polygon points="855,178.5 867,178.5 861,164" fill="#c8ccd0"/><rect x="855" y="153.5" width="10.5" height="10.5" fill="#f6f8fa"/><rect x="863.5" y="154" width="2" height="10" fill="#d0d4d8"/><path d="M883 134V132.5A1.8 1.8 0 0 1 886.6 132.5" fill="none" stroke="#e8f0f8" stroke-width="0.9"/><rect x="882" y="134" width="5.5" height="4" fill="#e8f0f8"/><path d="M849 193.5L843.5 196L849 198.5M844 196H850" fill="none" stroke="#d8eefa" stroke-opacity="0.55" stroke-width="0.9"/><text x="851" y="200" font-family="Liberation Sans" font-size="9" fill="#d8eefa" fill-opacity="0.45">Persp</text></svg>
<div class="a" style="left:182px;top:414px;width:237px;height:19px;background:#19212b;border-radius:3px;border:1px solid #10151b"></div>
<div class="a" style="left:186px;top:418px;width:1px;height:11px;background:#555"></div><div class="a" style="left:188.5px;top:418px;width:1px;height:11px;background:#555"></div>
<div class="a" style="left:193px;top:416px;width:24px;height:15px;background:#46607c"></div>
<div class="a" style="left:218px;top:416px;width:24px;height:15px;background:#46607c"></div>
<div class="a" style="left:243px;top:416px;width:24px;height:15px;background:#46607c"></div>
<div class="a" style="left:268px;top:416px;width:24px;height:15px;background:#46607c"></div>
<div class="a" style="left:293px;top:416px;width:23px;height:15px;background:#46607c"></div>
<div class="a" style="left:317px;top:416px;width:24px;height:15px;background:#555555"></div>
<div class="a" style="left:342px;top:416px;width:24px;height:15px;background:#46607c"></div>
<div class="a" style="left:367px;top:416px;width:23px;height:15px;background:#555555"></div>
<div class="a" style="left:391px;top:416px;width:24px;height:15px;background:#555555"></div>
<svg style="left:199px;top:417px" width="13" height="13" viewBox="0 0 14 13"><path d="M7 1V12M1.5 6.5H12.5" stroke="#b9d2ea" stroke-width="0.9"/><path d="M7 0.5L5.5 2.4H8.5Z M7 12.5L5.5 10.6H8.5Z M1 6.5L2.9 5V8Z M13 6.5L11.1 5V8Z" fill="#d0e0f0"/></svg>
<svg style="left:224px;top:418px" width="12" height="11" viewBox="0 0 12 11"><rect x="3" y="0.5" width="7" height="3" fill="none" stroke="#d0d0d0" stroke-width="0.9"/><rect x="3.5" y="1" width="3" height="2" fill="#d0d0d0"/><path d="M1 5.5H11M1 9H11" stroke="#d0d0d0" stroke-width="0.9"/><rect x="6" y="4.3" width="1.5" height="2.4" fill="#d0d0d0"/><rect x="3" y="7.8" width="1.5" height="2.4" fill="#d0d0d0"/></svg>
<svg style="left:249px;top:417px" width="12" height="13" viewBox="0 0 12 13"><path d="M3 1V12M6 1V12M0.5 4H11.5M0.5 8H11.5M2 12L11 1M5 12L11 5" stroke="#d0d0d0" stroke-width="0.8"/></svg>
<svg style="left:274px;top:417px" width="12" height="12" viewBox="0 0 12 12"><path d="M6 0.5A5.5 5.5 0 1 1 6 11.5A5.5 5.5 0 1 1 6 0.5Z M5.2 1.4A4 4 0 1 0 5.2 9.4A4 4 0 1 0 5.2 1.4Z" fill="#e0e0e0" fill-rule="evenodd"/></svg>
<svg style="left:298px;top:417px" width="13" height="13" viewBox="0 0 13 13"><circle cx="4" cy="2.5" r="2" fill="#e0e0e0"/><path d="M6.5 5L12 8.5L6.5 12L1 8.5Z" fill="none" stroke="#e0e0e0" stroke-width="1"/><path d="M6.5 7L9 8.5L6.5 10L4 8.5Z" fill="#e0e0e0"/></svg>
<svg style="left:323px;top:418px" width="12" height="12" viewBox="0 0 12 12"><circle cx="4.5" cy="4.5" r="3.2" fill="none" stroke="#d0d0d0" stroke-width="1.1"/><path d="M7 7L11 11" stroke="#d0d0d0" stroke-width="1.3"/></svg>
<svg style="left:348px;top:417px" width="13" height="13" viewBox="0 0 13 13"><circle cx="6.5" cy="6.5" r="2.3" fill="#e0e0e0"/><path d="M6.5 0.5V12.5M0.5 6.5H12.5" stroke="#d0e0f0" stroke-width="0.9"/><path d="M6.5 0.3L5.2 2H7.8Z M6.5 12.7L5.2 11H7.8Z M0.3 6.5L2 5.2V7.8Z M12.7 6.5L11 5.2V7.8Z" fill="#e0e0e0"/></svg>
<svg style="left:372px;top:417px" width="13" height="13" viewBox="0 0 13 13"><rect x="0.5" y="0.5" width="7" height="5.5" fill="#d8d8d8"/><path d="M8 2L11 0.8V5.7L8 4.5Z" fill="#d8d8d8"/><path d="M1 9.5C3 6.5 9 6.5 11 9.5C9 12.5 3 12.5 1 9.5Z" fill="none" stroke="#d8d8d8" stroke-width="1"/><circle cx="6" cy="9.5" r="1.4" fill="#d8d8d8"/></svg>
<svg style="left:397px;top:417px" width="12" height="12" viewBox="0 0 12 12"><circle cx="6" cy="6" r="5" fill="none" stroke="#d0d0d0" stroke-width="1.1"/><path d="M8.8 3.2L5 5L3.2 8.8L7 7Z" fill="none" stroke="#d0d0d0" stroke-width="1"/></svg>

<div class="a" style="left:0;top:436px;width:902px;height:192px;background:#141414"></div>
<div class="a" style="left:0;top:437px;width:61px;height:17px;background:#383838;border-radius:0 2px 0 0"></div>
<svg style="left:7px;top:442px" width="9" height="8" viewBox="0 0 9 8"><path d="M0 0H3.5L4.5 1.2H9V8H0Z" fill="#c8c8c8"/></svg>
<div class="t" style="left:19px;top:442px;font-size:9.5px;color:#c4c4c4">Project</div>
<svg style="left:69px;top:441px" width="8" height="9" viewBox="0 0 8 9"><rect x="0.5" y="0.5" width="7" height="8" fill="none" stroke="#c8c8c8" stroke-width="1"/><path d="M2 2.5H6M2 4.5H4.5M2 6.5H6" stroke="#c8c8c8" stroke-width="0.9"/><path d="M5 3.5L7 4.5L5 5.5Z" fill="#c8c8c8"/></svg>
<div class="t" style="left:81px;top:442px;font-size:9.5px;color:#c4c4c4">Console</div>
<svg style="left:876px;top:442px" width="7" height="9" viewBox="0 0 7 9"><path d="M1.5 4V2.3A2 2 0 0 1 5.5 2.3" fill="none" stroke="#c8c8c8" stroke-width="1.1"/><rect x="0.8" y="4.3" width="5.4" height="4.2" fill="none" stroke="#c8c8c8" stroke-width="1.1"/></svg>
<svg style="left:891px;top:442px" width="3" height="9"><circle cx="1.5" cy="1" r="0.9" fill="#d0d0d0"/><circle cx="1.5" cy="4" r="0.9" fill="#d0d0d0"/><circle cx="1.5" cy="7" r="0.9" fill="#d0d0d0"/></svg>
<div class="a" style="left:0;top:454px;width:902px;height:15px;background:#3c3c3c"></div>
<div class="a" style="left:0;top:468px;width:902px;height:1px;background:#2a2a2a"></div>
<svg style="left:5px;top:457px" width="10" height="10"><path d="M5 0.5V9.5M0.5 5H9.5" stroke="#d8d8d8" stroke-width="1.5"/></svg>
<svg style="left:17px;top:460px" width="6" height="4"><path d="M0 0H6L3 3.5Z" fill="#c4c4c4"/></svg>
<div class="a" style="left:553px;top:456px;width:225px;height:12px;background:#2a2a2a;border-radius:3px"></div>
<svg style="left:556px;top:459px" width="7" height="7" viewBox="0 0 7 7"><circle cx="2.7" cy="2.7" r="1.9" fill="none" stroke="#d0d0d0" stroke-width="1.1"/><path d="M4 4L6.3 6.3" stroke="#d0d0d0" stroke-width="1.3"/></svg>
<svg style="left:780px;top:457px" width="10" height="10" viewBox="0 0 10 10"><rect x="2.3" y="0.6" width="7" height="7" rx="1" fill="none" stroke="#c4c4c4" stroke-width="1"/><path d="M4.5 5.5L7.3 2.7M5 2.6H7.4V5" fill="none" stroke="#c4c4c4" stroke-width="0.9"/><rect x="0.4" y="5.6" width="3.5" height="3.8" rx="0.8" fill="#3c3c3c" stroke="#c4c4c4" stroke-width="0.9"/></svg>
<div class="a" style="left:794px;top:455px;width:1px;height:13px;background:#2e2e2e"></div>
<div class="a" style="left:813px;top:455px;width:1px;height:13px;background:#2e2e2e"></div>
<div class="a" style="left:832px;top:455px;width:1px;height:13px;background:#2e2e2e"></div>
<div class="a" style="left:851px;top:455px;width:1px;height:13px;background:#2e2e2e"></div>
<div class="a" style="left:870px;top:455px;width:1px;height:13px;background:#2e2e2e"></div>
<svg style="left:798px;top:456px" width="10" height="11" viewBox="0 0 10 11"><rect x="0.5" y="0.5" width="4" height="4" fill="#c8c8c8"/><circle cx="3" cy="8" r="2.5" fill="#c8c8c8"/><path d="M7.5 3.5L10 8H5Z" fill="#c8c8c8"/></svg>
<svg style="left:817px;top:457px" width="10" height="10" viewBox="0 0 10 10"><path d="M5.5 0.5H9.5V4.5L4.5 9.5L0.5 5.5Z" fill="#c8c8c8"/><circle cx="7.5" cy="2.5" r="0.9" fill="#3c3c3c"/></svg>
<svg style="left:836px;top:456px" width="11" height="11" viewBox="0 0 11 11"><circle cx="5.5" cy="5.5" r="5" fill="#d0d0d0"/><rect x="4.7" y="2.2" width="1.6" height="4.3" fill="#3c3c3c"/><rect x="4.7" y="7.4" width="1.6" height="1.5" fill="#3c3c3c"/></svg>
<svg style="left:856px;top:457px" width="10" height="10" viewBox="0 0 10 10"><path d="M5 0.5L6.3 3.7L9.7 3.9L7.1 6.1L7.9 9.4L5 7.6L2.1 9.4L2.9 6.1L0.3 3.9L3.7 3.7Z" fill="#9a9a9a"/></svg>
<svg style="left:875px;top:458px" width="11" height="8" viewBox="0 0 11 8"><path d="M0.5 4C2.8 0.5 8.2 0.5 10.5 4C8.2 7.5 2.8 7.5 0.5 4Z" fill="none" stroke="#8a8a8a" stroke-width="0.9"/><circle cx="5.5" cy="4" r="1.6" fill="#8a8a8a"/></svg>
<div class="t" style="left:887px;top:457px;font-size:9.5px;color:#a8a8a8">24</div>
<div class="a" style="left:0;top:469px;width:156px;height:159px;background:#383838;overflow:hidden" id="ptree">
<div class="a" style="left:0;top:127px;width:147px;height:12px;background:#4d4d4d"></div>
<div class="a" style="left:45px;top:2px;width:9px;height:4px;background:#c8c8c8"></div>
<div class="t" style="left:58px;top:-3.8px;font-size:9.3px;color:#c4c4c4">ExampleEscenaCharacter</div>
<svg style="left:24px;top:11px" width="6" height="5"><path d="M0 0H6L3 5Z" fill="#6e6e6e"/></svg>
<svg style="left:34px;top:9px" width="11" height="9" viewBox="0 0 11 9"><path d="M0 0.5H4L5 1.8H9V3H2.2L0 8.5Z" fill="#c8c8c8"/><path d="M2.5 3.8H11L8.8 8.5H0.3Z" fill="#c8c8c8"/></svg>
<div class="t" style="left:47px;top:8.2px;font-size:9.3px;color:#c4c4c4">Models</div>
<svg style="left:35px;top:23px" width="6" height="5"><path d="M0 0H6L3 5Z" fill="#6e6e6e"/></svg>
<svg style="left:45px;top:21px" width="11" height="9" viewBox="0 0 11 9"><path d="M0 0.5H4L5 1.8H9V3H2.2L0 8.5Z" fill="#c8c8c8"/><path d="M2.5 3.8H11L8.8 8.5H0.3Z" fill="#c8c8c8"/></svg>
<div class="t" style="left:58px;top:20.2px;font-size:9.3px;color:#c4c4c4">FBXCharacters</div>
<svg style="left:46px;top:34px" width="5" height="6"><path d="M0 0V6L5 3Z" fill="#6e6e6e"/></svg>
<svg style="left:55px;top:33px" width="10" height="9" viewBox="0 0 10 9"><path d="M0 0.5H4L5 1.8H10V8.5H0Z" fill="#c8c8c8"/></svg>
<div class="t" style="left:68px;top:32.2px;font-size:9.3px;color:#c4c4c4">Character_01</div>
<svg style="left:46px;top:46px" width="5" height="6"><path d="M0 0V6L5 3Z" fill="#6e6e6e"/></svg>
<svg style="left:55px;top:45px" width="10" height="9" viewBox="0 0 10 9"><path d="M0 0.5H4L5 1.8H10V8.5H0Z" fill="#c8c8c8"/></svg>
<div class="t" style="left:68px;top:44.2px;font-size:9.3px;color:#c4c4c4">Character_02</div>
<svg style="left:46px;top:58px" width="5" height="6"><path d="M0 0V6L5 3Z" fill="#6e6e6e"/></svg>
<svg style="left:55px;top:57px" width="10" height="9" viewBox="0 0 10 9"><path d="M0 0.5H4L5 1.8H10V8.5H0Z" fill="#c8c8c8"/></svg>
<div class="t" style="left:68px;top:56.2px;font-size:9.3px;color:#c4c4c4">Character_03</div>
<svg style="left:46px;top:70px" width="5" height="6"><path d="M0 0V6L5 3Z" fill="#6e6e6e"/></svg>
<svg style="left:55px;top:69px" width="10" height="9" viewBox="0 0 10 9"><path d="M0 0.5H4L5 1.8H10V8.5H0Z" fill="#c8c8c8"/></svg>
<div class="t" style="left:68px;top:68.2px;font-size:9.3px;color:#c4c4c4">Character_04</div>
<svg style="left:46px;top:82px" width="5" height="6"><path d="M0 0V6L5 3Z" fill="#6e6e6e"/></svg>
<svg style="left:55px;top:81px" width="10" height="9" viewBox="0 0 10 9"><path d="M0 0.5H4L5 1.8H10V8.5H0Z" fill="#c8c8c8"/></svg>
<div class="t" style="left:68px;top:80.2px;font-size:9.3px;color:#c4c4c4">Character_05</div>
<svg style="left:46px;top:94px" width="5" height="6"><path d="M0 0V6L5 3Z" fill="#6e6e6e"/></svg>
<svg style="left:55px;top:93px" width="10" height="9" viewBox="0 0 10 9"><path d="M0 0.5H4L5 1.8H10V8.5H0Z" fill="#c8c8c8"/></svg>
<div class="t" style="left:68px;top:92.2px;font-size:9.3px;color:#c4c4c4">Character_06</div>
<svg style="left:46px;top:106px" width="5" height="6"><path d="M0 0V6L5 3Z" fill="#6e6e6e"/></svg>
<svg style="left:55px;top:105px" width="10" height="9" viewBox="0 0 10 9"><path d="M0 0.5H4L5 1.8H10V8.5H0Z" fill="#c8c8c8"/></svg>
<div class="t" style="left:68px;top:104.2px;font-size:9.3px;color:#c4c4c4">Character_07</div>
<svg style="left:46px;top:118px" width="5" height="6"><path d="M0 0V6L5 3Z" fill="#6e6e6e"/></svg>
<svg style="left:55px;top:117px" width="10" height="9" viewBox="0 0 10 9"><path d="M0 0.5H4L5 1.8H10V8.5H0Z" fill="#c8c8c8"/></svg>
<div class="t" style="left:68px;top:116.2px;font-size:9.3px;color:#c4c4c4">Character_08</div>
<svg style="left:45px;top:129px" width="10" height="9" viewBox="0 0 10 9"><path d="M0 0.5H4L5 1.8H10V8.5H0Z" fill="#c8c8c8"/></svg>
<div class="t" style="left:58px;top:128.2px;font-size:9.3px;color:#c4c4c4">Prefabs</div>
<svg style="left:34px;top:141px" width="10" height="9" viewBox="0 0 10 9"><path d="M0 0.5H4L5 1.8H10V8.5H0Z" fill="#c8c8c8"/></svg>
<div class="t" style="left:47px;top:140.2px;font-size:9.3px;color:#c4c4c4">ScriptVoxel</div>
<svg style="left:4px;top:154px" width="5" height="6"><path d="M0 0V6L5 3Z" fill="#6e6e6e"/></svg>
<svg style="left:13px;top:153px" width="10" height="9" viewBox="0 0 10 9"><path d="M0 0.5H4L5 1.8H10V8.5H0Z" fill="#c8c8c8"/></svg>
<div class="t" style="left:26px;top:152.2px;font-size:9.3px;color:#c4c4c4;font-weight:bold">Packages</div>
<div class="a" style="left:146px;top:0;width:10px;height:159px;background:#3a3a3a"></div>
<div class="a" style="left:147.5px;top:66px;width:7px;height:80px;background:#5e5e5e;border-radius:4px"></div>
<svg style="left:148px;top:5px" width="6" height="4"><path d="M0 4H6L3 0Z" fill="#d0d0d0"/></svg>
<svg style="left:148px;top:151px" width="6" height="4"><path d="M0 0H6L3 4Z" fill="#d0d0d0"/></svg>
</div>
<div class="a" style="left:156px;top:469px;width:1px;height:159px;background:#232323"></div>
<div class="a" style="left:157px;top:469px;width:745px;height:17px;background:#424242"></div>
<div class="t" style="left:159px;top:473.8px;font-size:9.3px;color:#b4b4b4">Assets</div>
<svg style="left:192px;top:475px" width="5" height="7"><path d="M0.8 0.5L4 3.5L0.8 6.5" fill="none" stroke="#9a9a9a" stroke-width="1"/></svg>
<div class="t" style="left:201px;top:473.8px;font-size:9.3px;color:#b4b4b4">VoxelCharacterModels</div>
<svg style="left:301px;top:475px" width="5" height="7"><path d="M0.8 0.5L4 3.5L0.8 6.5" fill="none" stroke="#9a9a9a" stroke-width="1"/></svg>
<div class="t" style="left:310px;top:473.8px;font-size:9.3px;color:#b4b4b4">Models</div>
<svg style="left:346px;top:475px" width="5" height="7"><path d="M0.8 0.5L4 3.5L0.8 6.5" fill="none" stroke="#9a9a9a" stroke-width="1"/></svg>
<div class="t b" style="left:355px;top:473.8px;font-size:9.3px;color:#d2d2d2">Prefabs</div>
<div class="a" style="left:157px;top:486px;width:745px;height:126px;background:#333333"></div>
<div class="a" style="left:169px;top:495px;width:45px;height:45px;background:#535353"></div>
<svg style="left:169px;top:495px;opacity:0.82" width="45" height="45"><rect x="15" y="2" width="13" height="5" fill="#d8d8d8"/><rect x="15" y="7" width="13" height="2" fill="#151515"/><rect x="15" y="9" width="13" height="4" fill="#c0c0c0"/><rect x="25" y="2" width="4" height="11" fill="#9ccc30"/><rect x="15" y="13" width="9" height="12" fill="#c8c8c8"/><rect x="23" y="13" width="4" height="12" fill="#7ab828"/><rect x="16" y="24" width="10" height="4" fill="#1a1a1a"/><rect x="19" y="28" width="7" height="15" fill="#1f3a78"/><rect x="24" y="28" width="2" height="15" fill="#162c60"/></svg>
<svg style="left:170px;top:543px" width="9" height="10" viewBox="0 0 11 12"><path d="M5.5 0.5L10.5 3V9L5.5 11.5L0.5 9V3Z" fill="#6cc8f0"/><path d="M0.5 3L5.5 5.6L10.5 3M5.5 5.6V11.5" fill="none" stroke="#2b6f94" stroke-width="0.9"/><path d="M5.5 0.5L10.5 3L5.5 5.6L0.5 3Z" fill="#98def9"/></svg>
<div class="t" style="left:181px;top:544px;font-size:8.6px;color:#c4c4c4;letter-spacing:-0.5px">Prefab_...</div>
<div class="a" style="left:226px;top:495px;width:45px;height:45px;background:#535353"></div>
<svg style="left:226px;top:495px;opacity:0.82" width="45" height="45"><rect x="20" y="2" width="10" height="10" fill="#404448"/><rect x="20" y="12" width="8" height="14" fill="#8894a0"/><rect x="27" y="12" width="3" height="14" fill="#606870"/><rect x="20" y="26" width="8" height="3" fill="#151515"/><rect x="23" y="29" width="7" height="12" fill="#484c52"/><rect x="22" y="40" width="8" height="3" fill="#e0e0e0"/></svg>
<svg style="left:227px;top:543px" width="9" height="10" viewBox="0 0 11 12"><path d="M5.5 0.5L10.5 3V9L5.5 11.5L0.5 9V3Z" fill="#6cc8f0"/><path d="M0.5 3L5.5 5.6L10.5 3M5.5 5.6V11.5" fill="none" stroke="#2b6f94" stroke-width="0.9"/><path d="M5.5 0.5L10.5 3L5.5 5.6L0.5 3Z" fill="#98def9"/></svg>
<div class="t" style="left:238px;top:544px;font-size:8.6px;color:#c4c4c4;letter-spacing:-0.5px">Prefab_...</div>
<div class="a" style="left:283px;top:495px;width:45px;height:45px;background:#535353"></div>
<svg style="left:283px;top:495px;opacity:0.82" width="45" height="45"><rect x="15" y="2" width="13" height="10" fill="#e8b020"/><rect x="15" y="12" width="8" height="17" fill="#d0d0d0"/><rect x="22" y="12" width="5" height="17" fill="#a8a8a8"/><rect x="21" y="15" width="4" height="3" fill="#202020"/><rect x="21" y="22" width="4" height="3" fill="#202020"/><rect x="18" y="29" width="8" height="12" fill="#e0e0e0"/><rect x="18" y="40" width="8" height="3" fill="#151515"/></svg>
<svg style="left:284px;top:543px" width="9" height="10" viewBox="0 0 11 12"><path d="M5.5 0.5L10.5 3V9L5.5 11.5L0.5 9V3Z" fill="#6cc8f0"/><path d="M0.5 3L5.5 5.6L10.5 3M5.5 5.6V11.5" fill="none" stroke="#2b6f94" stroke-width="0.9"/><path d="M5.5 0.5L10.5 3L5.5 5.6L0.5 3Z" fill="#98def9"/></svg>
<div class="t" style="left:295px;top:544px;font-size:8.6px;color:#c4c4c4;letter-spacing:-0.5px">Prefab_...</div>
<div class="a" style="left:340px;top:495px;width:45px;height:45px;background:#535353"></div>
<svg style="left:340px;top:495px;opacity:0.82" width="45" height="45"><rect x="16" y="2" width="12" height="10" fill="#e0a820"/><rect x="16" y="12" width="8" height="16" fill="#d0d0d0"/><rect x="23" y="12" width="4" height="16" fill="#a0a0a0"/><rect x="22" y="16" width="4" height="3" fill="#40a030"/><rect x="22" y="22" width="4" height="3" fill="#40a030"/><rect x="18" y="28" width="8" height="9" fill="#e0e0e0"/><rect x="18" y="37" width="8" height="6" fill="#303030"/></svg>
<svg style="left:341px;top:543px" width="9" height="10" viewBox="0 0 11 12"><path d="M5.5 0.5L10.5 3V9L5.5 11.5L0.5 9V3Z" fill="#6cc8f0"/><path d="M0.5 3L5.5 5.6L10.5 3M5.5 5.6V11.5" fill="none" stroke="#2b6f94" stroke-width="0.9"/><path d="M5.5 0.5L10.5 3L5.5 5.6L0.5 3Z" fill="#98def9"/></svg>
<div class="t" style="left:352px;top:544px;font-size:8.6px;color:#c4c4c4;letter-spacing:-0.5px">Prefab_...</div>
<div class="a" style="left:397px;top:495px;width:45px;height:45px;background:#535353"></div>
<svg style="left:397px;top:495px;opacity:0.82" width="45" height="45"><rect x="16" y="2" width="10" height="10" fill="#1e1e20"/><rect x="16" y="12" width="6" height="15" fill="#d8d8d8"/><rect x="22" y="12" width="4" height="15" fill="#d8b030"/><rect x="17" y="27" width="8" height="5" fill="#1a1a1a"/><rect x="19" y="32" width="7" height="10" fill="#e0e0e0"/><rect x="19" y="41" width="7" height="2" fill="#202020"/></svg>
<svg style="left:398px;top:543px" width="9" height="10" viewBox="0 0 11 12"><path d="M5.5 0.5L10.5 3V9L5.5 11.5L0.5 9V3Z" fill="#6cc8f0"/><path d="M0.5 3L5.5 5.6L10.5 3M5.5 5.6V11.5" fill="none" stroke="#2b6f94" stroke-width="0.9"/><path d="M5.5 0.5L10.5 3L5.5 5.6L0.5 3Z" fill="#98def9"/></svg>
<div class="t" style="left:409px;top:544px;font-size:8.6px;color:#c4c4c4;letter-spacing:-0.5px">Prefab_...</div>
<div class="a" style="left:454px;top:495px;width:45px;height:45px;background:#535353"></div>
<svg style="left:454px;top:495px;opacity:0.82" width="45" height="45"><rect x="15" y="2" width="11" height="11" fill="#101010"/><rect x="15" y="2" width="11" height="2" fill="#c8a070"/><rect x="25" y="2" width="3" height="10" fill="#b89050"/><rect x="16" y="13" width="9" height="12" fill="#585c60"/><rect x="15" y="25" width="4" height="3" fill="#e8e8e8"/><rect x="20" y="25" width="7" height="17" fill="#606468"/><rect x="20" y="41" width="6" height="2" fill="#e8e8e8"/></svg>
<svg style="left:455px;top:543px" width="9" height="10" viewBox="0 0 11 12"><path d="M5.5 0.5L10.5 3V9L5.5 11.5L0.5 9V3Z" fill="#6cc8f0"/><path d="M0.5 3L5.5 5.6L10.5 3M5.5 5.6V11.5" fill="none" stroke="#2b6f94" stroke-width="0.9"/><path d="M5.5 0.5L10.5 3L5.5 5.6L0.5 3Z" fill="#98def9"/></svg>
<div class="t" style="left:466px;top:544px;font-size:8.6px;color:#c4c4c4;letter-spacing:-0.5px">Prefab_...</div>
<div class="a" style="left:511px;top:495px;width:45px;height:45px;background:#535353"></div>
<svg style="left:511px;top:495px;opacity:0.82" width="45" height="45"><rect x="18" y="2" width="10" height="10" fill="#7030a0"/><rect x="17" y="6" width="7" height="5" fill="#e030e0"/><rect x="16" y="13" width="10" height="13" fill="#a01818"/><rect x="17" y="26" width="6" height="3" fill="#101010"/><rect x="19" y="28" width="7" height="14" fill="#505458"/></svg>
<svg style="left:512px;top:543px" width="9" height="10" viewBox="0 0 11 12"><path d="M5.5 0.5L10.5 3V9L5.5 11.5L0.5 9V3Z" fill="#6cc8f0"/><path d="M0.5 3L5.5 5.6L10.5 3M5.5 5.6V11.5" fill="none" stroke="#2b6f94" stroke-width="0.9"/><path d="M5.5 0.5L10.5 3L5.5 5.6L0.5 3Z" fill="#98def9"/></svg>
<div class="t" style="left:523px;top:544px;font-size:8.6px;color:#c4c4c4;letter-spacing:-0.5px">Prefab_...</div>
<div class="a" style="left:568px;top:495px;width:45px;height:45px;background:#535353"></div>
<svg style="left:568px;top:495px;opacity:0.82" width="45" height="45"><rect x="17" y="2" width="10" height="11" fill="#c05a20"/><rect x="20" y="5" width="3" height="3" fill="#e8d020"/><rect x="16" y="13" width="11" height="15" fill="#d040c0"/><rect x="19" y="28" width="8" height="14" fill="#1a40b0"/><rect x="18" y="27" width="3" height="2" fill="#e0e0e0"/></svg>
<svg style="left:569px;top:543px" width="9" height="10" viewBox="0 0 11 12"><path d="M5.5 0.5L10.5 3V9L5.5 11.5L0.5 9V3Z" fill="#6cc8f0"/><path d="M0.5 3L5.5 5.6L10.5 3M5.5 5.6V11.5" fill="none" stroke="#2b6f94" stroke-width="0.9"/><path d="M5.5 0.5L10.5 3L5.5 5.6L0.5 3Z" fill="#98def9"/></svg>
<div class="t" style="left:580px;top:544px;font-size:8.6px;color:#c4c4c4;letter-spacing:-0.5px">Prefab_...</div>
<div class="a" style="left:157px;top:612px;width:745px;height:16px;background:#3c3c3c"></div>
<div class="a" style="left:848px;top:620px;width:41px;height:1px;background:#777"></div>
<div class="a" style="left:868px;top:615.5px;width:9px;height:9px;background:#a8a8a8;border-radius:50%"></div>

<!-- TASKBAR -->
<div class="a" style="left:0;top:645px;width:1200px;height:30px;background:#101010"></div>
<div class="a" style="left:0;top:628px;width:1200px;height:17px;background:#141414"></div>
<svg style="left:1145px;top:632px" width="11" height="11" viewBox="0 0 11 11"><ellipse cx="5.5" cy="6.5" rx="3.3" ry="4" fill="#c8c8c8"/><circle cx="5.5" cy="2.3" r="1.8" fill="#c8c8c8"/><path d="M1 3.5L2.5 4.5M10 3.5L8.5 4.5M0.5 7H2M10.5 7H9M1 10.5L2.5 9.3M10 10.5L8.5 9.3M0.5 0.5L10.5 10.5" stroke="#c8c8c8" stroke-width="0.9"/></svg>
<svg style="left:1165px;top:632px" width="11" height="11" viewBox="0 0 11 11"><ellipse cx="5.5" cy="2.3" rx="4.5" ry="1.8" fill="#c8c8c8"/><path d="M1 4.5C1 6.5 10 6.5 10 4.5V6C10 8 1 8 1 6Z" fill="#c8c8c8"/><path d="M1 7.5C1 9.5 10 9.5 10 7.5V9C10 11 1 11 1 9Z" fill="#c8c8c8"/><path d="M1 1L10 10" stroke="#141414" stroke-width="1.2"/></svg>
<svg style="left:1184px;top:632px" width="11" height="11" viewBox="0 0 11 11"><circle cx="5.5" cy="5.5" r="4.8" fill="none" stroke="#c8c8c8" stroke-width="1"/><path d="M3.2 5.8L4.8 7.3L7.8 4" fill="none" stroke="#c8c8c8" stroke-width="1.1"/></svg>
<div class="a" style="left:1141px;top:630px;width:1px;height:13px;background:#222"></div><div class="a" style="left:1160px;top:630px;width:1px;height:13px;background:#222"></div><div class="a" style="left:1180px;top:630px;width:1px;height:13px;background:#222"></div>
<svg style="left:12px;top:654px" width="13" height="13" viewBox="0 0 13 13"><path d="M0 1.8L5.3 1.1V6.1H0Z M6.1 1L13 0V6.1H6.1Z M0 6.9H5.3V11.9L0 11.2Z M6.1 6.9H13V13L6.1 12Z" fill="#f2f2f2"/></svg>
<div class="a" style="left:38px;top:645px;width:36px;height:27px;background:#2c2c2c"></div>
<div class="a" style="left:38px;top:672px;width:36px;height:3px;background:#76b9ed"></div>
<div class="a" style="left:78px;top:672px;width:30px;height:3px;background:#76b9ed"></div>
<svg style="left:48px;top:651px" width="18" height="17" viewBox="0 0 18 17"><path d="M7.5 0.5L14 4.2V11.8L7.5 15.5L1 11.8V4.2Z" fill="#8a94a4"/><path d="M7.5 3.5L11 5.5V9.5L7.5 11.5L4 9.5V5.5Z M4 5.5L7.5 7.5L11 5.5M7.5 7.5V11.5" fill="none" stroke="#e8ecf0" stroke-width="1.2"/><text x="10.5" y="16" font-family="Liberation Sans" font-weight="bold" font-size="9" fill="#e8ecf0">6</text></svg>
<svg style="left:83px;top:650px" width="20" height="20" viewBox="0 0 20 20"><path d="M9 4C4 4 1 7.5 1 11C1 14.5 4 16 7 15.5C8.5 15.2 8 13.5 9.5 13.5C11 13.5 11.5 15 13.5 14.5C16.5 13.8 17.5 10.5 16 7.5C14.8 5.3 12 4 9 4Z" fill="#b8dcf0"/><circle cx="4.5" cy="10" r="1.4" fill="#e04040"/><circle cx="6.5" cy="7" r="1.4" fill="#50b050"/><circle cx="10" cy="6.3" r="1.4" fill="#f0b030"/><circle cx="7.5" cy="11.5" r="1" fill="#222"/><path d="M8 17L17 2" stroke="#e08a30" stroke-width="1.6"/><path d="M15.5 4L18 0.8L18.5 3.5Z" fill="#f0c080"/></svg>
<svg style="left:1036px;top:658px" width="9" height="6"><path d="M0.5 5L4.5 1L8.5 5" fill="none" stroke="#e8e8e8" stroke-width="1.1"/></svg>
<svg style="left:1052px;top:655px" width="14" height="12" viewBox="0 0 14 12"><rect x="3.5" y="0.5" width="10" height="7.5" fill="none" stroke="#e8e8e8" stroke-width="1"/><path d="M8.5 8V10.5M6 11H11" stroke="#e8e8e8" stroke-width="1"/><rect x="0.5" y="1" width="3.5" height="8" fill="#101010" stroke="#e8e8e8" stroke-width="1"/></svg>
<svg style="left:1070px;top:655px" width="13" height="12" viewBox="0 0 13 12"><path d="M0.5 4H3L6 1V11L3 8H0.5Z" fill="none" stroke="#e8e8e8" stroke-width="1"/><path d="M8 4A2.5 2.5 0 0 1 8 8M9.5 2.5A4.5 4.5 0 0 1 9.5 9.5M11 1A6.5 6.5 0 0 1 11 11" fill="none" stroke="#e8e8e8" stroke-width="0.9"/></svg>
<div class="t" style="left:1091.5px;top:656px;font-size:8.8px;color:#f0f0f0;-webkit-text-stroke:0;letter-spacing:-1.3px">ESP</div>
<div class="t" style="left:1125.5px;top:649.5px;font-size:8.6px;color:#f0f0f0;-webkit-text-stroke:0">20:49</div>
<div class="t" style="left:1119px;top:662px;font-size:8.6px;color:#f0f0f0;-webkit-text-stroke:0">7/1/2026</div>
<svg style="left:1169px;top:654px" width="14" height="13" viewBox="0 0 14 13"><path d="M0.5 0.5H13.5V9.5H8.5L7 12L5.5 9.5H0.5Z" fill="none" stroke="#e8e8e8" stroke-width="1"/></svg>
<div class="a" style="left:1196px;top:645px;width:1px;height:30px;background:#3a3a3a"></div>
</body></html>
